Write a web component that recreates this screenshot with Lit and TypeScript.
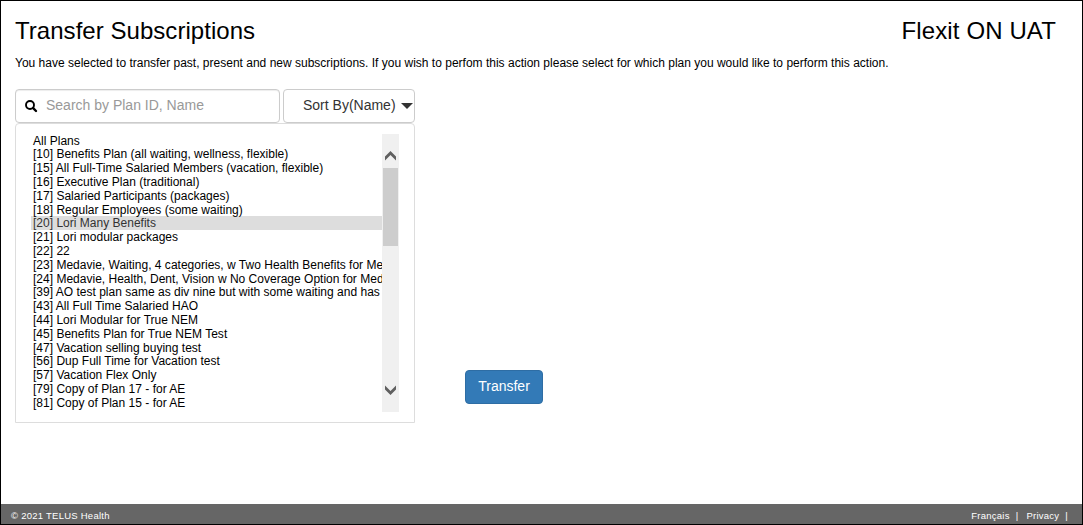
import { LitElement, html, css } from "lit";
import { customElement, state } from "lit/decorators.js";
import { classMap } from "lit/directives/class-map.js";

const PLANS = [
  "All Plans",
  "[10] Benefits Plan (all waiting, wellness, flexible)",
  "[15] All Full-Time Salaried Members (vacation, flexible)",
  "[16] Executive Plan (traditional)",
  "[17] Salaried Participants (packages)",
  "[18] Regular Employees (some waiting)",
  "[20] Lori Many Benefits",
  "[21] Lori modular packages",
  "[22] 22",
  "[23] Medavie, Waiting, 4 categories, w Two Health Benefits for Me",
  "[24] Medavie, Health, Dent, Vision w No Coverage Option for Med",
  "[39] AO test plan same as div nine but with some waiting and has",
  "[43] All Full Time Salaried HAO",
  "[44] Lori Modular for True NEM",
  "[45] Benefits Plan for True NEM Test",
  "[47] Vacation selling buying test",
  "[56] Dup Full Time for Vacation test",
  "[57] Vacation Flex Only",
  "[79] Copy of Plan 17 - for AE",
  "[81] Copy of Plan 15 - for AE",
];

@customElement("plan-list")
class PlanList extends LitElement {
  @state() private selected = 6;

  static styles = css`
    :host {
      display: flex;
      box-sizing: border-box;
      height: 300px;
      padding: 10px 15px 10px 15px;
      border: 1px solid #ddd;
      border-radius: 4px 4px 0 0;
    }
    .rows {
      flex: 1;
      min-width: 0;
      margin-top: -0.4px;
      overflow: hidden;
    }
    .row {
      height: 13.8px;
      padding-left: 2px;
      font-size: 12px;
      line-height: 14.6px;
      letter-spacing: 0.01px;
      white-space: nowrap;
      cursor: default;
    }
    .row.selected {
      background: #ddd;
      color: #333;
    }
    .bar {
      width: 17px;
      height: 278px;
      display: flex;
      flex-direction: column;
      align-items: center;
      background: #f0f0f0;
    }
    .bar svg {
      display: block;
      flex: none;
    }
    .thumb {
      width: 15px;
      height: 78px;
      background: #cdcdcd;
    }
    .track {
      flex: 1;
    }
  `;

  render() {
    return html`
      <div class="rows">
        ${PLANS.map(
          (plan, i) => html`<div
            class=${classMap({ row: true, selected: i === this.selected })}
            @click=${() => (this.selected = i)}
          >${plan}</div>`
        )}
      </div>
      <div class="bar">
        <svg width="17" height="34" viewBox="0 0 17 34">
          <path d="M3 22.500 8.500 17l5.500 5.500v4L8.500 21 3 26.500z" fill="#606060" />
        </svg>
        <div class="thumb"></div>
        <div class="track"></div>
        <svg width="17" height="34" viewBox="0 0 17 34">
          <path d="M3 11.500 8.500 17l5.500-5.500v-4L8.500 13 3 7.500z" fill="#606060" />
        </svg>
      </div>
    `;
  }
}

@customElement("app-root")
class AppRoot extends LitElement {
  static styles = css`
    :host {
      display: flex;
      flex-direction: column;
      box-sizing: border-box;
      height: 525px;
      border: 1px solid #000;
      background: #fff;
      color: #000;
      font-family: "Liberation Sans", Arial, sans-serif;
    }
    main {
      flex: 1;
      padding: 15px 26px 0 14px;
    }
    header {
      display: flex;
      justify-content: space-between;
    }
    h1,
    h2 {
      margin: 0;
      font-size: 24px;
      line-height: 30px;
      font-weight: 400;
      letter-spacing: 0.04px;
    }
    h2 {
      letter-spacing: 0.12px;
    }
    p {
      margin: 9px 0 0;
      font-size: 12px;
      line-height: 16px;
      letter-spacing: 0.005px;
      white-space: nowrap;
    }
    .work {
      display: flex;
      align-items: flex-end;
      gap: 50px;
      margin-top: 18px;
    }
    .picker {
      width: 400px;
    }
    .tools {
      display: flex;
      gap: 3px;
    }
    .search,
    .sort {
      display: flex;
      align-items: center;
      box-sizing: border-box;
      height: 34px;
      border: 1px solid #ccc;
      border-radius: 4px;
      font-size: 14px;
    }
    .search {
      width: 265px;
      padding-left: 9px;
      box-shadow: inset 0 1px 1px rgba(0, 0, 0, 0.075);
    }
    .search input {
      flex: 1;
      min-width: 0;
      margin: 0 0 2px 8px;
      padding: 0;
      border: 0;
      outline: 0;
      background: none;
      font: inherit;
    }
    .search input::placeholder {
      color: #999;
    }
    .sort {
      width: 132px;
      padding: 0 1px 0 19px;
      justify-content: space-between;
      color: #333;
      white-space: nowrap;
    }
    .sort span {
      margin-bottom: 2px;
    }
    .transfer {
      height: 34px;
      width: 78px;
      margin-bottom: 19px;
      padding: 0 0 2px;
      border: 1px solid #2e6da4;
      border-radius: 4px;
      background: #337ab7;
      color: #fff;
      font: 14px "Liberation Sans", Arial, sans-serif;
    }
    footer {
      display: flex;
      justify-content: space-between;
      height: 20px;
      padding: 0 14px 0 10px;
      background: #666;
      color: #fff;
      font-size: 9.5px;
      line-height: 23px;
      letter-spacing: 0.25px;
    }
    .links {
      display: flex;
    }
    .links span + span {
      margin-left: 6px;
    }
    .links span.next {
      margin-left: 8px;
    }
  `;

  render() {
    return html`
      <main>
        <header>
          <h1>Transfer Subscriptions</h1>
          <h2>Flexit ON UAT</h2>
        </header>
        <p>You have selected to transfer past, present and new subscriptions. If you wish to perfom this action please select for which plan you would like to perform this action.</p>
        <div class="work">
          <div class="picker">
            <div class="tools">
              <label class="search">
                <svg width="13" height="13" viewBox="0 0 13 13" fill="none" stroke="#000">
                  <circle cx="5" cy="5" r="4" stroke-width="1.900" />
                  <path d="M8.200 8.200l2.800 2.800" stroke-width="2.400" stroke-linecap="round" />
                </svg>
                <input placeholder="Search by Plan ID, Name" />
              </label>
              <div class="sort">
                <span>Sort By(Name)</span>
                <svg width="12" height="6" viewBox="0 0 12 6"><path d="M0 0h12L6 6z" fill="#333" /></svg>
              </div>
            </div>
            <plan-list></plan-list>
          </div>
          <button class="transfer">Transfer</button>
        </div>
      </main>
      <footer>
        <span>© 2021 TELUS Health</span>
        <div class="links">
          <span>Français</span><span>|</span><span class="next">Privacy</span><span>|</span>
        </div>
      </footer>
    `;
  }
}
